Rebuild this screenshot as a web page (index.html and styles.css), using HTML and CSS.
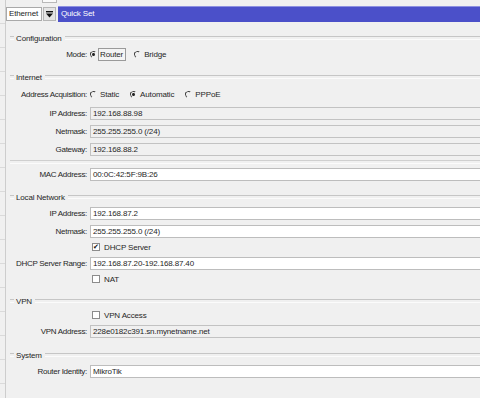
FILE: index.html
```html
<!DOCTYPE html>
<html lang="en">
  <head>
    <meta charset="UTF-8" />
    <title>Quick Set</title>
    <link rel="stylesheet" href="styles.css">
  </head>
  <body>
    <div class="window">
      <div class="gutter"></div>
      <main class="main">
        <div class="topstrip"><span class="stub"></span></div>
        <div class="tabbar">
          <div class="select">Ethernet</div>
          <div class="dropbtn">
            <svg width="7" height="7" viewBox="0 0 7 7"><rect x="0" y="0" width="7" height="1.4" fill="#111"/><path d="M0 2.4h7L3.5 6.6z" fill="#111"/></svg>
          </div>
          <div class="title">Quick Set</div>
        </div>

        <div class="form">
          <section class="group first">
            <div class="head"><span>Configuration</span></div>
            <div class="row">
              <label>Mode:</label>
              <div class="opts">
                <span class="opt"><i class="radio on"></i><b class="focus">Router</b></span>
                <span class="opt"><i class="radio"></i><b>Bridge</b></span>
              </div>
            </div>
          </section>

          <section class="group">
            <div class="head"><span>Internet</span></div>
            <div class="row tall">
              <label>Address Acquisition:</label>
              <div class="opts">
                <span class="opt"><i class="radio"></i><b>Static</b></span>
                <span class="opt"><i class="radio on"></i><b>Automatic</b></span>
                <span class="opt"><i class="radio"></i><b>PPPoE</b></span>
              </div>
            </div>
            <div class="row"><label>IP Address:</label><div class="field ro">192.168.88.98</div></div>
            <div class="row"><label>Netmask:</label><div class="field ro">255.255.255.0 (/24)</div></div>
            <div class="row"><label>Gateway:</label><div class="field ro">192.168.88.2</div></div>
            <div class="sep"></div>
            <div class="row"><label>MAC Address:</label><div class="field">00:0C:42:5F:9B:26</div></div>
          </section>

          <section class="group">
            <div class="head"><span>Local Network</span></div>
            <div class="row"><label>IP Address:</label><div class="field">192.168.87.2</div></div>
            <div class="row"><label>Netmask:</label><div class="field">255.255.255.0 (/24)</div></div>
            <div class="row check"><label></label><span class="box on">&#10004;</span><span>DHCP Server</span></div>
            <div class="row"><label>DHCP Server Range:</label><div class="field">192.168.87.20-192.168.87.40</div></div>
            <div class="row check"><label></label><span class="box"></span><span>NAT</span></div>
          </section>

          <section class="group wide">
            <div class="head"><span>VPN</span></div>
            <div class="row check"><label></label><span class="box"></span><span>VPN Access</span></div>
            <div class="row"><label>VPN Address:</label><div class="field ro">228e0182c391.sn.mynetname.net</div></div>
          </section>

          <section class="group wide">
            <div class="head"><span>System</span></div>
            <div class="row"><label>Router Identity:</label><div class="field">MikroTik</div></div>
          </section>
        </div>
      </main>
    </div>
  </body>
</html>
```

FILE: styles.css
```css
* {
  margin: 0;
  padding: 0;
  box-sizing: border-box;
}

body {
  background: #f0f0f0;
  font-family: "Liberation Sans", Arial, sans-serif;
  font-size: 8px;
  letter-spacing: -0.15px;
  color: #262626;
  overflow: hidden;
}

.window {
  display: flex;
  min-height: 398px;
}

.gutter {
  width: 6px;
  border-right: 1px solid #cdcdcd;
  background: repeating-linear-gradient(180deg, transparent 0 23px, #dadada 23px 24px);
}

.main {
  flex: 1;
  min-width: 0;
}

/* top bits */
.topstrip {
  height: 6px;
  position: relative;
}

.topstrip .stub {
  position: absolute;
  left: 36px;
  top: -4px;
  width: 15px;
  height: 7px;
  border: 1px solid #b8b8b8;
  background: #fafafa;
}

.tabbar {
  display: flex;
  align-items: center;
  height: 16px;
}

.select {
  width: 36px;
  height: 14px;
  background: #fff;
  border: 1px solid #a9a9a9;
  padding-left: 2px;
  line-height: 12px;
}

.dropbtn {
  width: 13px;
  height: 14px;
  margin-left: 1px;
  display: flex;
  align-items: center;
  justify-content: center;
  background: #e4e4e4;
  border: 1px solid #b5b5b5;
}

.title {
  flex: 1;
  height: 16px;
  margin-left: 2px;
  background: #4b50c9;
  border-top: 1px solid #8d90e0;
  color: #fff;
  padding-left: 3px;
  line-height: 14px;
}

/* form */
.form {
  padding-top: 9px;
}

.group {
  margin-top: 7px;
}

.group.first {
  margin-top: 0;
}

.group.wide {
  margin-top: 8px;
}

.head {
  display: flex;
  align-items: center;
  height: 14px;
}

.head::before,
.head::after {
  content: "";
  height: 2px;
  border-top: 1px solid #c6c6c6;
  border-bottom: 1px solid #fbfbfb;
}

.head::before {
  width: 4px;
  margin-left: 4px;
}

.head::after {
  flex: 1;
}

.head span {
  padding: 0 3px 0 2px;
}

.row {
  display: flex;
  align-items: center;
  height: 18px;
}

.row.tall {
  height: 20px;
}

.row.check {
  height: 14px;
}

.row label {
  width: 81px;
  flex: none;
  text-align: right;
  margin-right: 3px;
  white-space: nowrap;
  letter-spacing: -0.3px;
}

.opts {
  display: flex;
  align-items: center;
  gap: 8px;
}

.opt {
  display: flex;
  align-items: center;
}

.opt b {
  font-weight: normal;
  border: 1px solid transparent;
  padding: 1px 2px 1px 1px;
  margin-left: 1px;
}

.opt b.focus {
  border-color: #9a9a9a;
  background: #f4f4f4;
}

.radio {
  width: 7px;
  height: 7px;
  border-radius: 50%;
  border: 1px solid;
  border-color: #444 #f4f4f4 #f4f4f4 #444;
  transform: rotate(-10deg);
  display: flex;
  align-items: center;
  justify-content: center;
}

.radio.on::after {
  content: "";
  width: 3px;
  height: 3px;
  border-radius: 50%;
  background: #222;
}

.field {
  flex: 1;
  height: 13px;
  margin-right: -6px;
  background: #fff;
  border: 1px solid #bdbdbd;
  padding-left: 2px;
  line-height: 11px;
  white-space: nowrap;
}

.field.ro {
  background: #f0f0f0;
  border-color: #c2c2c2;
}

.sep {
  height: 7px;
  margin-left: 4px;
  display: flex;
  align-items: center;
}

.sep::after {
  content: "";
  flex: 1;
  height: 2px;
  border-top: 1px solid #cfcfcf;
  border-bottom: 1px solid #fbfbfb;
}

.box {
  width: 8px;
  height: 8px;
  margin-left: 2px;
  margin-right: 4px;
  background: #fff;
  border: 1px solid #8c8c8c;
  font-size: 7px;
  line-height: 6px;
  text-align: center;
  color: #111;
}
```
